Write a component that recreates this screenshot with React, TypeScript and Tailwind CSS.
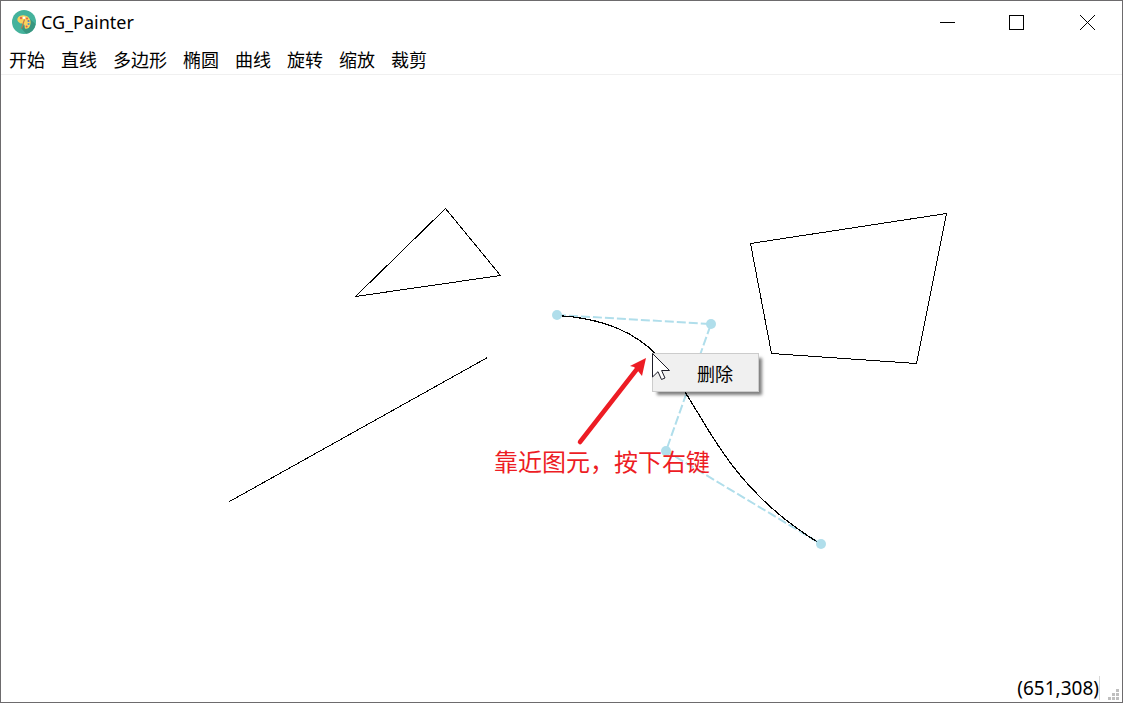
import React from "react";

const menus = ["开始", "直线", "多边形", "椭圆", "曲线", "旋转", "缩放", "裁剪"];

function PaletteLogo() {
  return (
    <svg width="24" height="24" viewBox="0 0 24 24" aria-hidden="true">
      <circle cx="12" cy="12" r="12" fill="#44b29c" />
      <path d="M18 9 L23.6 14 A12 12 0 0 1 14 23.8 L9 18Z" fill="#389680" />
      <path
        d="M5.500 8.500C6.500 6 9.500 5 12.500 5.400c4 .4 6.300 3.600 6.100 7.200-.2 3.600-1.600 6.200-4.200 6.200-2.600 0-1-3-2.400-4.400-1-1-2.200-.4-3.800-1.200C6.200 12.200 4.800 10.500 5.500 8.500Z"
        fill="#f9d35d"
      />
      <circle cx="9" cy="8" r="1.200" fill="#e2674c" />
      <circle cx="12" cy="7.800" r="1.200" fill="#fff" />
      <circle cx="15" cy="8.600" r="1" fill="#e2574c" />
      <circle cx="16.500" cy="11" r="1.100" fill="#4e7ac7" />
      <circle cx="16.600" cy="14" r="1.100" fill="#4e9ad0" />
      <circle cx="14.600" cy="16.400" r="1" fill="#e2574c" />
      <path d="M12.500 9.500 L9.500 18.500" stroke="#bd7a4c" strokeWidth="1.200" />
    </svg>
  );
}

function TitleBar() {
  return (
    <header className="flex h-[45px] items-center justify-between pb-[3px]">
      <div className="flex items-center gap-[5px] pl-[11px]">
        <PaletteLogo />
        <h1 className="text-lg leading-6">CG_Painter</h1>
      </div>
      <div className="flex h-full">
        <button aria-label="最小化" className="flex w-[65px] items-center justify-center">
          <svg width="15" height="15" shapeRendering="crispEdges">
            <rect x="0" y="7" width="15" height="1" />
          </svg>
        </button>
        <button aria-label="最大化" className="flex w-[73px] items-center justify-center">
          <svg width="15" height="15" shapeRendering="crispEdges">
            <rect x="0.5" y="0.5" width="14" height="14" fill="none" stroke="#000" />
          </svg>
        </button>
        <button aria-label="关闭" className="flex w-[69px] items-center justify-center">
          <svg width="15" height="15">
            <path d="M0 0L15 15M15 0L0 15" stroke="#000" />
          </svg>
        </button>
      </div>
    </header>
  );
}

function Shapes() {
  return (
    <svg className="absolute inset-0 h-full w-full" fill="none" aria-hidden="true">
      <g stroke="#b0deeb" strokeWidth="2">
        <path d="M556 240L710 249L665 376L820 469" strokeDasharray="9 3" />
      </g>
      <g stroke="#000" shapeRendering="crispEdges" transform="translate(0.5 0.5)">
        <path d="M444 133L499 200L354 221Z" />
        <path d="M228 426L486 282" />
        <path d="M749 168L945 138L915 288L770 278Z" />
        <path d="M556 240C710 249 665 376 820 469" strokeWidth="1.200" />
      </g>
      <g fill="#b0deeb">
        <circle cx="556" cy="240" r="5" />
        <circle cx="710" cy="249" r="5" />
        <circle cx="665" cy="376" r="5" />
        <circle cx="820" cy="469" r="5" />
      </g>
      <path d="M579 367L636 294" stroke="#ed1c24" strokeWidth="4.500" strokeLinecap="round" />
      <path d="M645 283L641 301L637 296L633 292L629 291Z" fill="#ed1c24" />
    </svg>
  );
}

function Cursor() {
  return (
    <svg className="pointer-events-none absolute top-0 left-0 -mt-px -ml-px" width="19" height="29" aria-hidden="true">
      <path
        d="M0.500 0.500V24L6 18.700L9.500 26.500L13 25L9.600 17.500H17.500Z"
        fill="#fff"
        stroke="#1c1c28"
      />
    </svg>
  );
}

export default function App() {
  return (
    <div className="flex min-h-screen flex-col border border-[#6d6b6d] bg-white font-['Noto_Sans','Noto_Sans_CJK_SC',sans-serif] text-black">
      <TitleBar />
      <nav className="flex h-[29px] items-center gap-4 border-b border-[#f0f0f0] px-2 pb-[2px] font-['Noto_Sans_CJK_SC',sans-serif] text-lg leading-6">
        {menus.map((name) => (
          <button key={name}>{name}</button>
        ))}
      </nav>
      <main className="relative grow overflow-hidden">
        <Shapes />
        <p className="absolute top-[370px] left-[493px] font-['Noto_Sans_CJK_SC',sans-serif] text-2xl leading-8 whitespace-nowrap text-[#ed1c24]">
          靠近图元，按下右键
        </p>
        <div
          role="menu"
          className="absolute top-[278px] left-[651px] flex h-[39px] w-[107px] border border-[#ccc] bg-[#f0f0f0] shadow-[4px_4px_3px_-1px_rgba(0,0,0,0.5)]"
        >
          <button
            role="menuitem"
            className="w-full pl-11 text-left font-['Noto_Sans_CJK_SC',sans-serif] text-lg leading-6"
          >
            删除
          </button>
          <Cursor />
        </div>
      </main>
      <footer className="flex h-7 items-center justify-end gap-2 pr-[3px]">
        <output className="border-r border-[#d7d7d7] text-[19px] leading-6">(651,308)</output>
        <svg className="mb-[2px] self-end" width="11" height="11" fill="#bfbfbf" shapeRendering="crispEdges" aria-hidden="true">
          <path d="M8 0h3v3h-3zM4 4h3v3h-3zM8 4h3v3h-3zM0 8h3v3h-3zM4 8h3v3h-3zM8 8h3v3h-3z" />
        </svg>
      </footer>
    </div>
  );
}
